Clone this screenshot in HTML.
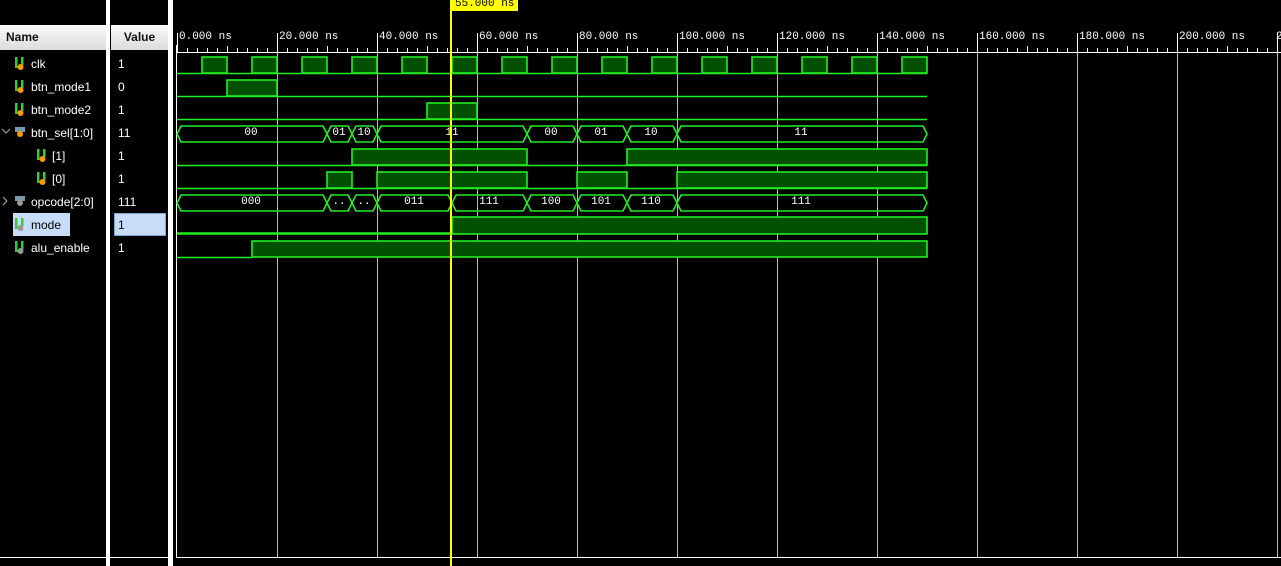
<!DOCTYPE html>
<html><head><meta charset="utf-8"><style>
body{margin:0;width:1281px;height:566px;background:#000;overflow:hidden;position:relative;font-family:"Liberation Sans",sans-serif}
.hdr{position:absolute;top:25px;height:25px;background:linear-gradient(#fafafa,#dcdcdc);font-weight:bold;font-size:12px;line-height:25px;color:#111}
.n{position:absolute;left:31px;color:#fff;font-size:12px;line-height:14px}
.v{position:absolute;left:118px;color:#fff;font-size:12px;line-height:14px}
.vl{position:absolute;background:#fff}
</style></head><body>
<div class="hdr" style="left:0;width:106px;padding-left:6px;box-sizing:border-box">Name</div>
<div class="hdr" style="left:111px;width:57px;text-align:center">Value</div>
<div class="vl" style="left:106px;top:0;width:4px;height:566px"></div>
<div class="vl" style="left:168px;top:0;width:5px;height:566px"></div>
<div class="vl" style="left:0;top:557px;width:106px;height:1px"></div>
<div class="vl" style="left:110px;top:557px;width:58px;height:1px"></div>
<div style="position:absolute;left:13px;top:213px;width:57px;height:23px;background:#c8dcf8"></div>
<div style="position:absolute;left:114px;top:213px;width:50px;height:21px;background:#c8dcf8;border:1px solid #7aa7d8"></div>
<svg width="173" height="566" style="position:absolute;left:0;top:0" font-family="Liberation Sans" font-size="12">
<defs><g id="ic"><rect x="0" y="0" width="2.5" height="11" fill="#3c3"/><rect x="6" y="0" width="2.5" height="8" fill="#3c3"/><circle cx="5.5" cy="10" r="3" fill="#f90"/></g>
<g id="ig"><rect x="0" y="0" width="2.5" height="11" fill="#3c3"/><rect x="6" y="0" width="2.5" height="8" fill="#3c3"/><circle cx="5.5" cy="10" r="3" fill="#999"/></g>
<g id="ib"><rect x="0" y="1" width="10" height="5" fill="#79a"/><circle cx="5" cy="8" r="3" fill="#f90"/></g>
<g id="ibg"><rect x="0" y="1" width="10" height="5" fill="#79a"/><circle cx="5" cy="8" r="3" fill="#999"/></g></defs>
<use href="#ic" x="15" y="57"/><use href="#ic" x="15" y="80"/><use href="#ic" x="15" y="103"/>
<path d="M2 129l4 4 4-4" stroke="#aaa" fill="none"/><use href="#ib" x="15" y="126"/>
<use href="#ic" x="37" y="149"/><use href="#ic" x="37" y="172"/>
<path d="M3 197l4 4-4 4" stroke="#aaa" fill="none"/><use href="#ibg" x="15" y="195"/>
<use href="#ig" x="15" y="218"/><use href="#ig" x="15" y="241"/>
</svg>
<div class="n" style="top:57px">clk</div><div class="v" style="top:57px">1</div>
<div class="n" style="top:80px">btn_mode1</div><div class="v" style="top:80px">0</div>
<div class="n" style="top:103px">btn_mode2</div><div class="v" style="top:103px">1</div>
<div class="n" style="top:126px">btn_sel[1:0]</div><div class="v" style="top:126px">11</div>
<div class="n" style="top:149px;left:52px">[1]</div><div class="v" style="top:149px">1</div>
<div class="n" style="top:172px;left:52px">[0]</div><div class="v" style="top:172px">1</div>
<div class="n" style="top:195px">opcode[2:0]</div><div class="v" style="top:195px">111</div>
<div class="n" style="top:218px;color:#000">mode</div><div class="v" style="top:218px;color:#000">1</div>
<div class="n" style="top:241px">alu_enable</div><div class="v" style="top:241px">1</div>

<svg width="1281" height="566" style="position:absolute;left:0;top:0" font-family="Liberation Mono,monospace" font-size="11">
<rect x="176" y="45" width="1" height="513" fill="#fff"/>
<rect x="176" y="557" width="1105" height="1" fill="#fff"/>
<rect x="177" y="52" width="1104" height="1" fill="#fff"/>
<g stroke="#fff" stroke-width="1">
<path d="M187.5 48v4M197.5 48v4M207.5 48v4M217.5 48v4M227.5 46v6M237.5 48v4M247.5 48v4M257.5 48v4M267.5 48v4M287.5 48v4M297.5 48v4M307.5 48v4M317.5 48v4M327.5 46v6M337.5 48v4M347.5 48v4M357.5 48v4M367.5 48v4M387.5 48v4M397.5 48v4M407.5 48v4M417.5 48v4M427.5 46v6M437.5 48v4M447.5 48v4M457.5 48v4M467.5 48v4M487.5 48v4M497.5 48v4M507.5 48v4M517.5 48v4M527.5 46v6M537.5 48v4M547.5 48v4M557.5 48v4M567.5 48v4M587.5 48v4M597.5 48v4M607.5 48v4M617.5 48v4M627.5 46v6M637.5 48v4M647.5 48v4M657.5 48v4M667.5 48v4M687.5 48v4M697.5 48v4M707.5 48v4M717.5 48v4M727.5 46v6M737.5 48v4M747.5 48v4M757.5 48v4M767.5 48v4M787.5 48v4M797.5 48v4M807.5 48v4M817.5 48v4M827.5 46v6M837.5 48v4M847.5 48v4M857.5 48v4M867.5 48v4M887.5 48v4M897.5 48v4M907.5 48v4M917.5 48v4M927.5 46v6M937.5 48v4M947.5 48v4M957.5 48v4M967.5 48v4M987.5 48v4M997.5 48v4M1007.5 48v4M1017.5 48v4M1027.5 46v6M1037.5 48v4M1047.5 48v4M1057.5 48v4M1067.5 48v4M1087.5 48v4M1097.5 48v4M1107.5 48v4M1117.5 48v4M1127.5 46v6M1137.5 48v4M1147.5 48v4M1157.5 48v4M1167.5 48v4M1187.5 48v4M1197.5 48v4M1207.5 48v4M1217.5 48v4M1227.5 46v6M1237.5 48v4M1247.5 48v4M1257.5 48v4M1267.5 48v4"/>
<path d="M177.5 33v20M277.5 33v20M377.5 33v20M477.5 33v20M577.5 33v20M677.5 33v20M777.5 33v20M877.5 33v20M977.5 33v20M1077.5 33v20M1177.5 33v20M1277.5 33v20"/>
</g>
<g stroke="#bbb" stroke-width="1"><path d="M277.5 53v504M377.5 53v504M477.5 53v504M577.5 53v504M677.5 53v504M777.5 53v504M877.5 53v504M977.5 53v504M1077.5 53v504M1177.5 53v504M1277.5 53v504"/></g>
<g fill="#fff">
<text x="179" y="39">0.000 ns</text><text x="279" y="39">20.000 ns</text><text x="379" y="39">40.000 ns</text><text x="479" y="39">60.000 ns</text><text x="579" y="39">80.000 ns</text><text x="679" y="39">100.000 ns</text><text x="779" y="39">120.000 ns</text><text x="879" y="39">140.000 ns</text><text x="979" y="39">160.000 ns</text><text x="1079" y="39">180.000 ns</text><text x="1179" y="39">200.000 ns</text><text x="1276" y="39">2</text>
</g>
<g stroke="#22ee22" stroke-width="1.6" fill="#005000">
<path d="M177 73.5H927" fill="none"/>
<rect x="202" y="57" width="25" height="16"/><rect x="252" y="57" width="25" height="16"/><rect x="302" y="57" width="25" height="16"/><rect x="352" y="57" width="25" height="16"/><rect x="402" y="57" width="25" height="16"/><rect x="452" y="57" width="25" height="16"/><rect x="502" y="57" width="25" height="16"/><rect x="552" y="57" width="25" height="16"/><rect x="602" y="57" width="25" height="16"/><rect x="652" y="57" width="25" height="16"/><rect x="702" y="57" width="25" height="16"/><rect x="752" y="57" width="25" height="16"/><rect x="802" y="57" width="25" height="16"/><rect x="852" y="57" width="25" height="16"/><rect x="902" y="57" width="25" height="16"/>
<path d="M177 96.5H927" fill="none"/><rect x="227" y="80" width="50" height="16"/>
<path d="M177 119.5H927" fill="none"/><rect x="427" y="103" width="50" height="16"/>
<path d="M177 165.5H927" fill="none"/><rect x="352" y="149" width="175" height="16"/><rect x="627" y="149" width="300" height="16"/>
<path d="M177 188.5H927" fill="none"/><rect x="327" y="172" width="25" height="16"/><rect x="377" y="172" width="150" height="16"/><rect x="577" y="172" width="50" height="16"/><rect x="677" y="172" width="250" height="16"/>
<path d="M177 233.5H452" fill="none" stroke-width="2.5"/><rect x="452" y="217" width="475" height="17"/>
<path d="M177 257.5H252" fill="none"/><rect x="252" y="241" width="675" height="16"/>
</g>
<g stroke="#22ee22" stroke-width="1.6" fill="none">
<path d="M181 126H323L327 134L331 126H348L352 134L356 126H373L377 134L381 126H523L527 134L531 126H573L577 134L581 126H623L627 134L631 126H673L677 134L681 126H923L927 134L923 142H681L677 134L673 142H631L627 134L623 142H581L577 134L573 142H531L527 134L523 142H381L377 134L373 142H356L352 134L348 142H331L327 134L323 142H181L177 134Z"/>
<path d="M181 195H323L327 203L331 195H348L352 203L356 195H373L377 203L381 195H448L452 203L456 195H523L527 203L531 195H573L577 203L581 195H623L627 203L631 195H673L677 203L681 195H923L927 203L923 211H681L677 203L673 211H631L627 203L623 211H581L577 203L573 211H531L527 203L523 211H456L452 203L448 211H381L377 203L373 211H356L352 203L348 211H331L327 203L323 211H181L177 203Z"/>
</g>
<g fill="#fff" text-anchor="middle">
<text x="251" y="135">00</text><text x="339" y="135">01</text><text x="364" y="135">10</text><text x="452" y="135">11</text><text x="551" y="135">00</text><text x="601" y="135">01</text><text x="651" y="135">10</text><text x="801" y="135">11</text>
<text x="251" y="204">000</text><text x="339" y="204">..</text><text x="364" y="204">..</text><text x="414" y="204">011</text><text x="489" y="204">111</text><text x="551" y="204">100</text><text x="601" y="204">101</text><text x="651" y="204">110</text><text x="801" y="204">111</text>
</g>
<rect x="450" y="0" width="2" height="566" fill="#ff0"/>
<rect x="451" y="0" width="67" height="11" fill="#ff0"/>
<text x="455" y="6" fill="#000">55.000 ns</text>
</svg>
</body></html>
